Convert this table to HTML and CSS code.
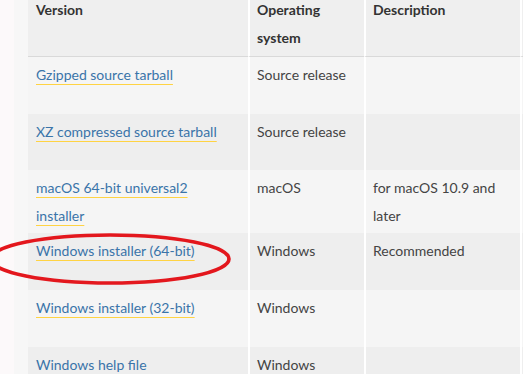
FILE: index.html
```html
<!DOCTYPE html>
<html lang="en">
<head>
<meta charset="utf-8">
<title>Files</title>
<link rel="stylesheet" href="styles.css">
</head>
<body>
<div class="gutter">
  <div class="content">
    <table class="files">
      <colgroup>
        <col class="c-version">
        <col class="c-os">
        <col class="c-desc">
        <col class="c-more">
      </colgroup>
      <thead>
        <tr class="head">
          <th>Version</th>
          <th>Operating system</th>
          <th>Description</th>
          <th class="more"></th>
        </tr>
      </thead>
      <tbody>
        <tr class="odd">
          <td><a href="#">Gzipped source tarball</a></td>
          <td>Source release</td>
          <td></td>
          <td class="more"></td>
        </tr>
        <tr class="even short">
          <td><a href="#">XZ compressed source tarball</a></td>
          <td>Source release</td>
          <td></td>
          <td class="more"></td>
        </tr>
        <tr class="odd tall">
          <td><a href="#">macOS 64-bit universal2 installer</a></td>
          <td>macOS</td>
          <td>for macOS 10.9 and later</td>
          <td class="more"></td>
        </tr>
        <tr class="even">
          <td><a href="#">Windows installer (64-bit)</a></td>
          <td>Windows</td>
          <td>Recommended</td>
          <td class="more"></td>
        </tr>
        <tr class="odd">
          <td><a href="#">Windows installer (32-bit)</a></td>
          <td>Windows</td>
          <td></td>
          <td class="more"></td>
        </tr>
        <tr class="even last">
          <td><a href="#">Windows help file</a></td>
          <td>Windows</td>
          <td></td>
          <td class="more"></td>
        </tr>
      </tbody>
    </table>
  </div>
</div>

<!-- hand-drawn highlight around the recommended installer -->
<svg class="highlight" width="260" height="64" viewBox="0 0 260 64" aria-hidden="true">
  <ellipse cx="130" cy="31" rx="119" ry="24" fill="none" stroke="#e3171d" stroke-width="3.6"/>
</svg>
</body>
</html>
```

FILE: styles.css
```css
html, body {
  margin: 0;
  padding: 0;
  overflow: hidden;
}

body {
  background: #fcf9fa;
  font-family: Lato, "Liberation Sans", sans-serif;
  font-size: 14px;
  color: #444;
  position: relative;
  width: 523px;
  height: 374px;
}

.gutter {
  padding-left: 14px;
}

.content {
  background: #f7f7f7;
  padding-left: 14px;
  height: 374px;
  overflow: hidden;
}

.files {
  border-collapse: separate;
  border-spacing: 0;
  table-layout: fixed;
  width: 495px;
  margin-top: -6px;
  line-height: 28px;
}

.c-version { width: 220px; }
.c-os { width: 116px; }
.c-desc { width: 156px; }
.c-more { width: 3px; }

.files th,
.files td {
  vertical-align: top;
  text-align: left;
  padding: 2px 8px 0 8px;
}

.files td {
  padding-top: 4px;
}

/* the version column keeps a wider right gutter */
.files th:first-child,
.files td:first-child {
  padding-right: 14px;
}

.files th + th,
.files td + td {
  border-left: 2px solid #fff;
  padding-left: 7px;
}

.files .more,
.files th + th.more,
.files td + td.more {
  padding: 0;
}

.files th {
  font-weight: 700;
  color: #333;
  background: #efefef;
  border-bottom: 1px solid #d9d9d9;
}

.head { height: 63px; }
.files tbody tr { height: 57px; }
.files tbody tr.short { height: 56px; }
.files tbody tr.tall { height: 63px; }
.files tbody tr.last { height: 26px; }

.odd td { background: #f5f5f5; }
.even td { background: #eeeeee; }

.files a {
  color: #3a74a9;
  text-decoration: underline;
  text-decoration-color: #ffd343;
  text-decoration-thickness: 1px;
  text-underline-offset: 4px;
}

.highlight {
  position: absolute;
  left: -20px;
  top: 228px;
}
```
